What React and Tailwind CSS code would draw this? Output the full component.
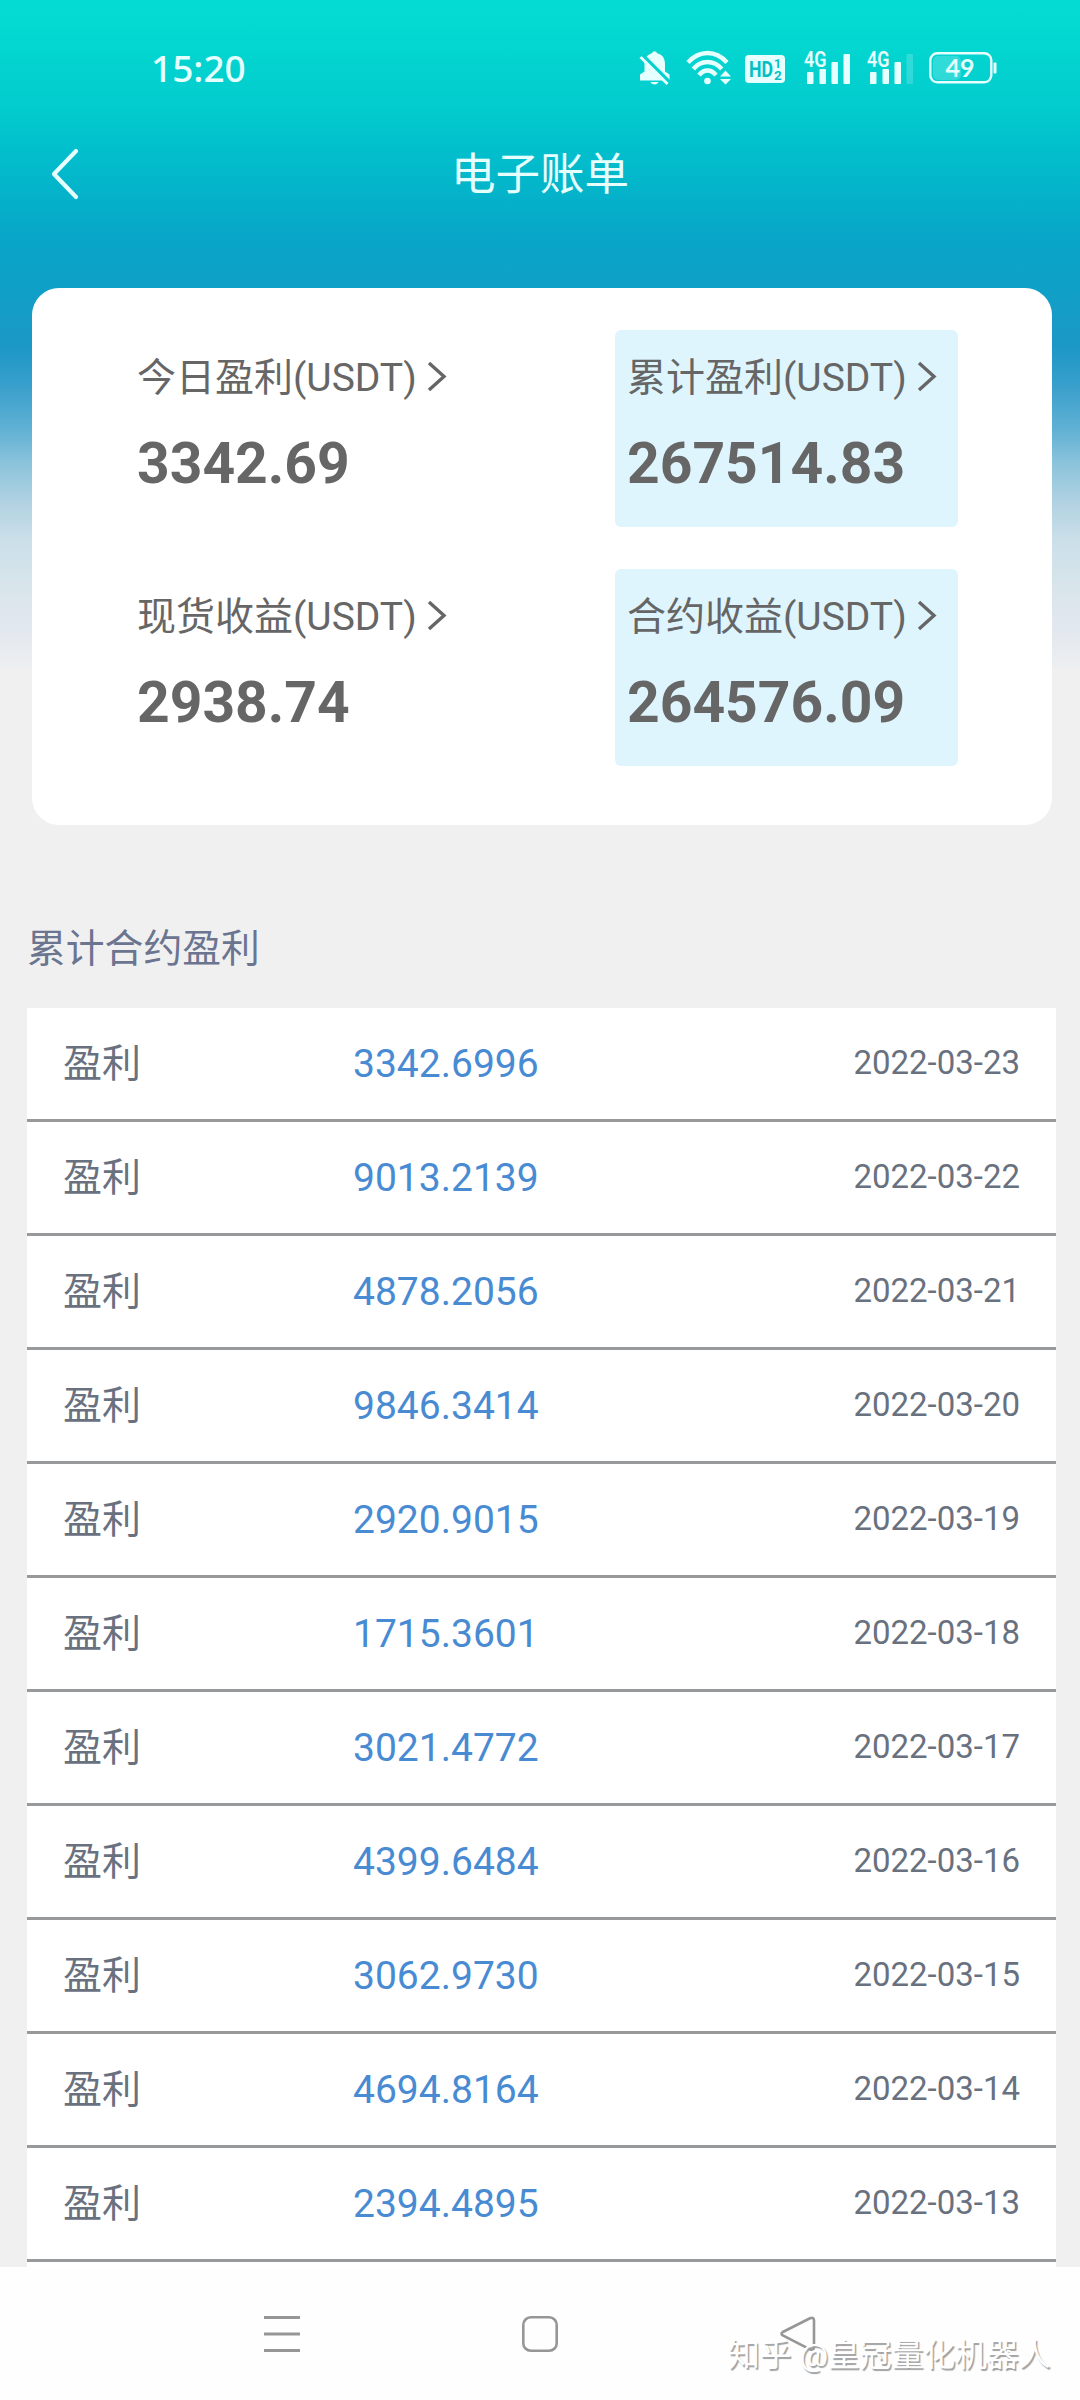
const stats = [
  { label: '今日盈利(USDT)', value: '3342.69' },
  { label: '累计盈利(USDT)', value: '267514.83', highlighted: true },
  { label: '现货收益(USDT)', value: '2938.74' },
  { label: '合约收益(USDT)', value: '264576.09', highlighted: true },
];

const records = [
  { date: '2022-03-23', amount: '3342.6996' },
  { date: '2022-03-22', amount: '9013.2139' },
  { date: '2022-03-21', amount: '4878.2056' },
  { date: '2022-03-20', amount: '9846.3414' },
  { date: '2022-03-19', amount: '2920.9015' },
  { date: '2022-03-18', amount: '1715.3601' },
  { date: '2022-03-17', amount: '3021.4772' },
  { date: '2022-03-16', amount: '4399.6484' },
  { date: '2022-03-15', amount: '3062.9730' },
  { date: '2022-03-14', amount: '4694.8164' },
  { date: '2022-03-13', amount: '2394.4895' },
];

function MutedBellIcon() {
  return (
    <svg width="32" height="36" viewBox="0 0 32 36" fill="currentColor">
      <path d="M12.500 3.500Q14 1.300 15.500 1.300T18.500 3.500C23.500 4.500 26 8.500 26 14V21.500L30.500 24.500V30.500H1V24.500L5.500 21.500V13C5.500 8 8.500 4.500 12.500 3.500z" />
      <path d="M11.500 32h8c-.6 1.500-2 2.500-4 2.500s-3.400-1-4-2.500z" />
      <path d="M3 4.500L32 33.500" stroke="#03d0cf" strokeWidth="3.500" />
      <path d="M1.500 7L28.500 34" stroke="currentColor" strokeWidth="2.800" />
    </svg>
  );
}

function WifiIcon() {
  return (
    <svg width="46" height="36" viewBox="0 0 46 36" fill="none" stroke="currentColor" strokeWidth="4.400">
      <path d="M2 12.500C13.500-.200 29.500-.200 41 12.500" />
      <path d="M7.300 19C15 9.700 28 9.700 35.700 19" />
      <path d="M13 25.200C18 19 25 19 30 25.200" />
      <circle cx="21.500" cy="31" r="3.300" fill="currentColor" stroke="none" />
      <path d="M39.500 20.500l5.500 6H34zM39.500 34.500l5.500-5.500H34z" fill="currentColor" stroke="none" />
    </svg>
  );
}

function HdIcon() {
  return (
    <svg width="40" height="28" viewBox="0 0 40 28" fontFamily="Roboto" fontWeight="700">
      <rect width="40" height="28" rx="4" fill="currentColor" />
      <g fill="#04bfc4">
        <text x="4" y="22" fontSize="22.500" textLength="24" lengthAdjust="spacingAndGlyphs">HD</text>
        <text x="29" y="13" fontSize="12.500">1</text>
        <text x="29" y="25" fontSize="13.500">2</text>
      </g>
    </svg>
  );
}

function SignalIcon({ weak }) {
  return (
    <svg className="overflow-visible" width="47" height="34" viewBox="0 0 47 34" fill="currentColor">
      <text x="0" y="16" fontFamily="Roboto" fontWeight="600" fontSize="22" textLength="22.500" lengthAdjust="spacingAndGlyphs">4G</text>
      <rect x="3" y="21" width="6.500" height="12" rx="1" />
      <rect x="15.500" y="18" width="6.500" height="15" rx="1" />
      <rect x="27.500" y="11" width="6.500" height="22" rx="1" />
      <rect x="39.500" y="3" width="6.500" height="30" rx="1" opacity={weak ? 0.2 : 1} />
    </svg>
  );
}

function BatteryIcon() {
  return (
    <svg width="68" height="32" viewBox="0 0 68 32" fill="none">
      <rect x="4" y="4" width="28" height="24" rx="5" fill="currentColor" opacity="0.2" />
      <rect x="1.300" y="1.300" width="61" height="29" rx="7" stroke="currentColor" strokeWidth="2.400" />
      <rect x="64.500" y="10.500" width="3" height="11" rx="1" fill="currentColor" />
      <text x="31" y="24.500" textAnchor="middle" fontFamily="Lato" fontWeight="700" fontSize="25" fill="currentColor">49</text>
    </svg>
  );
}

function StatusBar() {
  return (
    <div className="flex h-[136px] items-center justify-between pr-[83px] pl-[151px]">
      <span className="pb-0.5 font-['Noto_Sans'] text-[37px] leading-none font-medium">15:20</span>
      <div className="flex items-center">
        <MutedBellIcon />
        <div className="ml-[15px]"><WifiIcon /></div>
        <div className="ml-[13px] pt-0.5"><HdIcon /></div>
        <div className="ml-[19px]"><SignalIcon /></div>
        <div className="ml-[16px]"><SignalIcon weak /></div>
        <div className="ml-[15px]"><BatteryIcon /></div>
      </div>
    </div>
  );
}

function StatCard({ label, value, highlighted }) {
  return (
    <div className={`h-[197px] w-[343px] rounded-md pt-[21px] pl-[12px] ${highlighted ? 'bg-[#dff5fe]' : ''}`}>
      <div className="flex h-[54px] items-center text-[39px] leading-none whitespace-nowrap">
        {label}
        <svg className="mb-1 ml-[10px]" width="20" height="32" viewBox="0 0 20 32" fill="none" stroke="currentColor" strokeWidth="3.400">
          <path d="M2 3L17 16.500L2 30" />
        </svg>
      </div>
      <div className="mt-[29px] text-[57px] leading-[60px] font-bold">{value}</div>
    </div>
  );
}

function NavBar() {
  return (
    <div className="relative flex grow items-start justify-between bg-[#fefefe] pt-[48px] pr-[264px] pl-[264px] text-[#969696]">
      <svg width="36" height="37" viewBox="0 0 36 37" fill="none" stroke="currentColor" strokeWidth="3">
        <path d="M0 2.500h36M0 19h36M0 35.500h36" />
      </svg>
      <svg width="36" height="37" viewBox="0 0 36 37" fill="none" stroke="currentColor" strokeWidth="2.600">
        <rect x="1.300" y="2.300" width="33.400" height="33.400" rx="7.500" />
      </svg>
      <svg width="36" height="37" viewBox="0 0 36 37" fill="none" stroke="currentColor" strokeWidth="2.600">
        <path d="M2.800 17L30 3.300Q34 1.800 34 5.500V32Q34 36 30 34.300L2.800 20.500Q.300 18.500 2.800 17z" />
      </svg>
      <div className="absolute top-[66px] left-[728px] text-[31.800px] leading-[44px] whitespace-nowrap text-white [text-shadow:1.5px_1.5px_1px_#a0a0a0]">
        知乎 @皇冠量化机器人
      </div>
    </div>
  );
}

export default function App() {
  return (
    <div className="flex h-[2400px] w-[1080px] flex-col overflow-hidden bg-[#f0f0f0] bg-[linear-gradient(180deg,#04dcd3_0px,#03d5d0_50px,#02cbcd_110px,#02bfcc_150px,#04b4ca_190px,#08a5c8_240px,#10a0c7_290px,#1b97c6_345px,#389fcb_385px,#61b1d4_430px,#8dc4dc_465px,#b3d3e2_505px,#cbdfe9_540px,#d9e5eb_590px,#e3e8ef_630px,#edeff1_669px,#f0f0f0_670px)] font-[Roboto,'Noto_Sans_CJK_SC',sans-serif] text-[#666666]">
      <header className="text-[#e6ffff]">
        <StatusBar />
        <div className="flex h-[76px] items-center pr-[80px] pl-[50px]">
          <svg width="30" height="52" viewBox="0 0 30 52" fill="none" stroke="currentColor" strokeWidth="4.200" strokeLinecap="round" strokeLinejoin="round">
            <path d="M26 3L4 26L26 49" />
          </svg>
          <h1 className="grow pt-0.5 text-center text-[44.500px] leading-none">电子账单</h1>
        </div>
      </header>

      <section className="mt-[76px] mr-[28px] ml-[32px] h-[537px] rounded-[27px] bg-white pt-[42px] pl-[93px]">
        <div className="grid grid-cols-[343px_343px] gap-x-[147px] gap-y-[42px]">
          {stats.map(stat => (
            <StatCard key={stat.label} {...stat} />
          ))}
        </div>
      </section>

      <h2 className="mt-[95px] pl-[27px] text-[38.800px] leading-[58px] text-[#6b7590]">累计合约盈利</h2>

      <ul className="mt-[30px] mr-[24px] ml-[27px] bg-white pb-[5px]">
        {records.map(({ date, amount }) => (
          <li key={date} className="flex h-[114px] items-center border-b-3 border-[#97999b] pr-[36px] pl-[36px] text-[#69717f]">
            <span className="w-[290px] pt-0.5 text-[39px]">盈利</span>
            <span className="grow pt-px text-[39px] text-[#488bd3]">{amount}</span>
            <span className="pb-0.5 text-[33px]">{date}</span>
          </li>
        ))}
      </ul>

      <NavBar />
    </div>
  );
}
